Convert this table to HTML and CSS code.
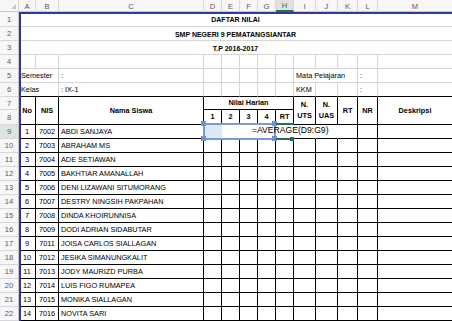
FILE: index.html
```html
<!DOCTYPE html>
<html>
<head>
<meta charset="utf-8">
<link rel="stylesheet" href="styles.css">
</head>
<body>
<div class="sheet">
  <div class="ch corner"><span class="tri"></span></div>
  <div class="ch">A</div><div class="ch">B</div><div class="ch">C</div><div class="ch">D</div><div class="ch">E</div><div class="ch">F</div><div class="ch">G</div><div class="ch active-h">H</div><div class="ch">I</div><div class="ch">J</div><div class="ch">K</div><div class="ch">L</div><div class="ch">M</div>

  <div class="rh">1</div><div class="c title span13">DAFTAR NILAI</div>
  <div class="rh">2</div><div class="c title span13">SMP NEGERI 9 PEMATANGSIANTAR</div>
  <div class="rh">3</div><div class="c title span13">T.P 2016-2017</div>

  <div class="rh">4</div>
  <div class="c"></div><div class="c"></div><div class="c"></div><div class="c"></div><div class="c"></div><div class="c"></div><div class="c"></div><div class="c"></div><div class="c"></div><div class="c"></div><div class="c"></div><div class="c"></div><div class="c"></div>

  <div class="rh">5</div>
  <div class="c span2">Semester</div><div class="c">:</div>
  <div class="c"></div><div class="c"></div><div class="c"></div><div class="c"></div><div class="c"></div>
  <div class="c span3">Mata Pelajaran</div><div class="c">:</div><div class="c"></div>

  <div class="rh">6</div>
  <div class="c kb span2">Kelas</div><div class="c kb">: IX-1</div>
  <div class="c kb"></div><div class="c kb"></div><div class="c kb"></div><div class="c kb"></div><div class="c kb"></div>
  <div class="c kb">KKM</div><div class="c kb"></div><div class="c kb"></div><div class="c kb">:</div><div class="c kb"></div>

  <div class="rh">7</div>
  <div class="c k hd rs2">No</div>
  <div class="c k hd rs2">NIS</div>
  <div class="c k hd rs2">Nama Siswa</div>
  <div class="c k hd span5">Nilai Harian</div>
  <div class="c k hd rs2 wrap">N.<br>UTS</div>
  <div class="c k hd rs2 wrap">N.<br>UAS</div>
  <div class="c k hd rs2">RT</div>
  <div class="c k hd rs2">NR</div>
  <div class="c k hd rs2">Deskripsi</div>
  <div class="rh">8</div>
  <div class="c k hd">1</div><div class="c k hd">2</div><div class="c k hd">3</div><div class="c k hd">4</div><div class="c k hd">RT</div>

  <div class="rh active-r">9</div>
  <div class="c k ctr">1</div><div class="c k ctr">7002</div><div class="c k name">ABDI SANJAYA</div>
  <div class="c k nr reffill"></div><div class="c k nr"></div><div class="c k nr"></div><div class="c k nr"></div><div class="c k nr"></div><div class="c k nr"></div><div class="c k nr"></div><div class="c k"></div><div class="c k"></div><div class="c k"></div>

  <div class="rh">10</div>
  <div class="c k ctr">2</div><div class="c k ctr">7003</div><div class="c k name">ABRAHAM MS</div>
  <div class="c k"></div><div class="c k"></div><div class="c k"></div><div class="c k"></div><div class="c k"></div><div class="c k"></div><div class="c k"></div><div class="c k"></div><div class="c k"></div><div class="c k"></div>

  <div class="rh">11</div>
  <div class="c k ctr">3</div><div class="c k ctr">7004</div><div class="c k name">ADE SETIAWAN</div>
  <div class="c k"></div><div class="c k"></div><div class="c k"></div><div class="c k"></div><div class="c k"></div><div class="c k"></div><div class="c k"></div><div class="c k"></div><div class="c k"></div><div class="c k"></div>

  <div class="rh">12</div>
  <div class="c k ctr">4</div><div class="c k ctr">7005</div><div class="c k name">BAKHTIAR AMANALLAH</div>
  <div class="c k"></div><div class="c k"></div><div class="c k"></div><div class="c k"></div><div class="c k"></div><div class="c k"></div><div class="c k"></div><div class="c k"></div><div class="c k"></div><div class="c k"></div>

  <div class="rh">13</div>
  <div class="c k ctr">5</div><div class="c k ctr">7006</div><div class="c k name">DENI LIZAWANI SITUMORANG</div>
  <div class="c k"></div><div class="c k"></div><div class="c k"></div><div class="c k"></div><div class="c k"></div><div class="c k"></div><div class="c k"></div><div class="c k"></div><div class="c k"></div><div class="c k"></div>

  <div class="rh">14</div>
  <div class="c k ctr">6</div><div class="c k ctr">7007</div><div class="c k name">DESTRY NINGSIH PAKPAHAN</div>
  <div class="c k"></div><div class="c k"></div><div class="c k"></div><div class="c k"></div><div class="c k"></div><div class="c k"></div><div class="c k"></div><div class="c k"></div><div class="c k"></div><div class="c k"></div>

  <div class="rh">15</div>
  <div class="c k ctr">7</div><div class="c k ctr">7008</div><div class="c k name">DINDA KHOIRUNNISA</div>
  <div class="c k"></div><div class="c k"></div><div class="c k"></div><div class="c k"></div><div class="c k"></div><div class="c k"></div><div class="c k"></div><div class="c k"></div><div class="c k"></div><div class="c k"></div>

  <div class="rh">16</div>
  <div class="c k ctr">8</div><div class="c k ctr">7009</div><div class="c k name">DODI ADRIAN SIDABUTAR</div>
  <div class="c k"></div><div class="c k"></div><div class="c k"></div><div class="c k"></div><div class="c k"></div><div class="c k"></div><div class="c k"></div><div class="c k"></div><div class="c k"></div><div class="c k"></div>

  <div class="rh">17</div>
  <div class="c k ctr">9</div><div class="c k ctr">7011</div><div class="c k name">JOISA CARLOS SIALLAGAN</div>
  <div class="c k"></div><div class="c k"></div><div class="c k"></div><div class="c k"></div><div class="c k"></div><div class="c k"></div><div class="c k"></div><div class="c k"></div><div class="c k"></div><div class="c k"></div>

  <div class="rh">18</div>
  <div class="c k ctr">10</div><div class="c k ctr">7012</div><div class="c k name">JESIKA SIMANUNGKALIT</div>
  <div class="c k"></div><div class="c k"></div><div class="c k"></div><div class="c k"></div><div class="c k"></div><div class="c k"></div><div class="c k"></div><div class="c k"></div><div class="c k"></div><div class="c k"></div>

  <div class="rh">19</div>
  <div class="c k ctr">11</div><div class="c k ctr">7013</div><div class="c k name">JODY MAURIZD PURBA</div>
  <div class="c k"></div><div class="c k"></div><div class="c k"></div><div class="c k"></div><div class="c k"></div><div class="c k"></div><div class="c k"></div><div class="c k"></div><div class="c k"></div><div class="c k"></div>

  <div class="rh">20</div>
  <div class="c k ctr">12</div><div class="c k ctr">7014</div><div class="c k name">LUIS FIGO RUMAPEA</div>
  <div class="c k"></div><div class="c k"></div><div class="c k"></div><div class="c k"></div><div class="c k"></div><div class="c k"></div><div class="c k"></div><div class="c k"></div><div class="c k"></div><div class="c k"></div>

  <div class="rh">21</div>
  <div class="c k ctr">13</div><div class="c k ctr">7015</div><div class="c k name">MONIKA SIALLAGAN</div>
  <div class="c k"></div><div class="c k"></div><div class="c k"></div><div class="c k"></div><div class="c k"></div><div class="c k"></div><div class="c k"></div><div class="c k"></div><div class="c k"></div><div class="c k"></div>

  <div class="rh">22</div>
  <div class="c k ctr">14</div><div class="c k ctr">7016</div><div class="c k name">NOVITA SARI</div>
  <div class="c k"></div><div class="c k"></div><div class="c k"></div><div class="c k"></div><div class="c k"></div><div class="c k"></div><div class="c k"></div><div class="c k"></div><div class="c k"></div><div class="c k"></div>

  <!-- overlays: print-area frame, formula reference box, active cell, in-cell editor -->
  <div class="frame-v"></div>
  <div class="frame-h"></div>
  <div class="refbox"></div>
  <div class="handle h-tl"></div>
  <div class="handle h-tr"></div>
  <div class="handle h-bl"></div>
  <div class="handle h-br"></div>
  <div class="act-top"></div>
  <div class="act-bot"></div>
  <div class="act-fill"></div>
  <div class="editor">=AVERAGE(D9:G9)</div>
</div>
</body>
</html>
```

FILE: styles.css
```css
html, body {
  margin: 0;
  padding: 0;
  background: #fff;
  overflow: hidden;
}

.sheet {
  position: relative;
  display: grid;
  grid-template-columns: 19px 17px 23px 145px 18px 18px 18px 18px 18px 22px 22px 20px 20px 75px;
  grid-template-rows: 12px 15px 14px 14px 14px 14px 14px 13px 15px repeat(14, 14px);
  width: 453px;
  font-family: "Liberation Sans", Arial, sans-serif;
  font-size: 7.3px;
  color: #000;
}

.ch, .rh {
  box-sizing: border-box;
  display: flex;
  align-items: center;
  justify-content: center;
  background: #f7f7f7;
  color: #5a5a5a;
  font-size: 7.6px;
  border-right: 1px solid #d8d8d8;
  border-bottom: 1px solid #d8d8d8;
}

.ch { border-bottom-color: #c6c6c6; padding-top: 1px; }
.rh { border-right-color: #c6c6c6; }

.corner { position: relative; }
.tri {
  position: absolute;
  right: 2px;
  bottom: 2px;
  width: 0;
  height: 0;
  border-left: 5px solid transparent;
  border-bottom: 5px solid #c8c8c8;
}

.active-h {
  background: #e1e1e1;
  color: #217346;
  border-bottom: 2px solid #217346;
}
.active-r {
  background: #e1e1e1;
  color: #217346;
}

.c {
  box-sizing: border-box;
  display: flex;
  align-items: center;
  padding: 0 2px;
  border-right: 1px solid #d6d6d6;
  border-bottom: 1px solid #d6d6d6;
  white-space: nowrap;
  min-width: 0;
  line-height: 1;
}

.span2 { grid-column: span 2; }
.span3 { grid-column: span 3; }
.span5 { grid-column: span 5; }
.span13 { grid-column: span 13; }
.rs2 { grid-row: span 2; }

.title {
  justify-content: center;
  font-weight: bold;
  font-size: 7px;
  padding-top: 1px;
}

.kb { border-bottom-color: #000; }
.k { border-right-color: #000; border-bottom-color: #000; }
.nr { border-right-color: transparent; }

.hd {
  justify-content: center;
  font-weight: bold;
  font-size: 7.3px;
  text-align: center;
}
.wrap { line-height: 1.45; white-space: normal; }

.ctr { justify-content: center; }
.name { padding-left: 2px; }

.reffill { background: #dde7f5; }

.frame-v {
  position: absolute;
  left: 19px;
  top: 12px;
  width: 2px;
  height: 309px;
  background: #34379c;
}
.frame-h {
  position: absolute;
  left: 19px;
  top: 12px;
  width: 434px;
  height: 2px;
  background: #34379c;
}

.refbox {
  position: absolute;
  left: 203px;
  top: 123px;
  width: 73px;
  height: 17px;
  box-sizing: border-box;
  border: 2px solid #7b98d8;
}
.handle {
  position: absolute;
  width: 5px;
  height: 5px;
  background: #6f8fd6;
}
.h-tl { left: 201px; top: 121px; }
.h-tr { left: 272px; top: 121px; }
.h-bl { left: 201px; top: 136px; }
.h-br { left: 272px; top: 136px; }

.act-top {
  position: absolute;
  left: 276px;
  top: 123px;
  width: 18px;
  height: 2px;
  background: #217346;
}
.act-bot {
  position: absolute;
  left: 276px;
  top: 138px;
  width: 14px;
  height: 2px;
  background: #217346;
}
.act-fill {
  position: absolute;
  left: 290px;
  top: 137px;
  width: 4px;
  height: 4px;
  background: #217346;
}

.editor {
  position: absolute;
  left: 252px;
  top: 126px;
  font-size: 8.6px;
  line-height: 1;
  white-space: nowrap;
  color: #000;
}
```
